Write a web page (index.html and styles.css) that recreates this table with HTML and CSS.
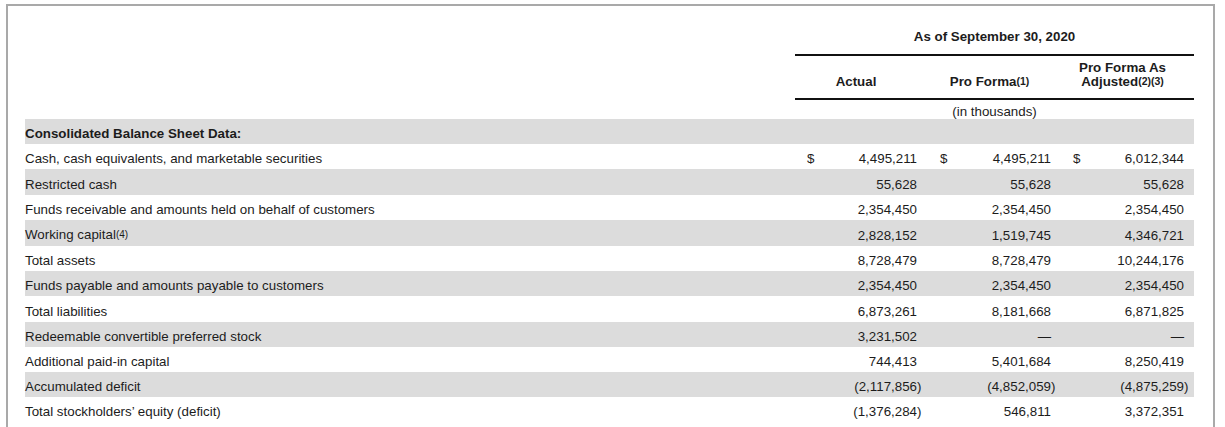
FILE: index.html
```html
<!DOCTYPE html>
<html lang="en">
<head>
  <meta charset="UTF-8">
  <title>Balance Sheet Data</title>
  <link rel="stylesheet" href="styles.css">
</head>
<body>

  <div class="frame">
    <table class="sheet">
      <colgroup>
        <col class="c-label">
        <col class="c-cur"><col class="c-num"><col class="c-par">
        <col class="c-cur"><col class="c-num2"><col class="c-par2">
        <col class="c-cur"><col class="c-num2"><col class="c-par2">
      </colgroup>

      <!-- column headings -->
      <tr class="head-top">
        <td></td>
        <th colspan="9" class="ruled">As of September 30, 2020</th>
      </tr>
      <tr class="head-cols">
        <td></td>
        <th colspan="2" class="ruled">Actual</th>
        <th class="ruled"></th>
        <th colspan="2" class="ruled">Pro Forma<span class="fn">(1)</span></th>
        <th class="ruled"></th>
        <th colspan="2" class="ruled">Pro Forma As<br>Adjusted<span class="fn">(2)(3)</span></th>
        <th class="ruled"></th>
      </tr>
      <tr class="head-unit">
        <td></td>
        <td colspan="9" class="unit">(in thousands)</td>
      </tr>

      <!-- data rows -->
      <tr class="row shade">
        <td class="label section">Consolidated Balance Sheet Data:</td>
        <td colspan="9"></td>
      </tr>
      <tr class="row">
        <td class="label">Cash, cash equivalents, and marketable securities</td>
        <td class="cur">$</td><td class="num">4,495,211</td><td class="par"></td>
        <td class="cur">$</td><td class="num">4,495,211</td><td class="par"></td>
        <td class="cur">$</td><td class="num">6,012,344</td><td class="par"></td>
      </tr>
      <tr class="row shade">
        <td class="label">Restricted cash</td>
        <td class="cur"></td><td class="num">55,628</td><td class="par"></td>
        <td class="cur"></td><td class="num">55,628</td><td class="par"></td>
        <td class="cur"></td><td class="num">55,628</td><td class="par"></td>
      </tr>
      <tr class="row">
        <td class="label">Funds receivable and amounts held on behalf of customers</td>
        <td class="cur"></td><td class="num">2,354,450</td><td class="par"></td>
        <td class="cur"></td><td class="num">2,354,450</td><td class="par"></td>
        <td class="cur"></td><td class="num">2,354,450</td><td class="par"></td>
      </tr>
      <tr class="row shade">
        <td class="label">Working capital<span class="fn">(4)</span></td>
        <td class="cur"></td><td class="num">2,828,152</td><td class="par"></td>
        <td class="cur"></td><td class="num">1,519,745</td><td class="par"></td>
        <td class="cur"></td><td class="num">4,346,721</td><td class="par"></td>
      </tr>
      <tr class="row">
        <td class="label">Total assets</td>
        <td class="cur"></td><td class="num">8,728,479</td><td class="par"></td>
        <td class="cur"></td><td class="num">8,728,479</td><td class="par"></td>
        <td class="cur"></td><td class="num">10,244,176</td><td class="par"></td>
      </tr>
      <tr class="row shade">
        <td class="label">Funds payable and amounts payable to customers</td>
        <td class="cur"></td><td class="num">2,354,450</td><td class="par"></td>
        <td class="cur"></td><td class="num">2,354,450</td><td class="par"></td>
        <td class="cur"></td><td class="num">2,354,450</td><td class="par"></td>
      </tr>
      <tr class="row">
        <td class="label">Total liabilities</td>
        <td class="cur"></td><td class="num">6,873,261</td><td class="par"></td>
        <td class="cur"></td><td class="num">8,181,668</td><td class="par"></td>
        <td class="cur"></td><td class="num">6,871,825</td><td class="par"></td>
      </tr>
      <tr class="row shade">
        <td class="label">Redeemable convertible preferred stock</td>
        <td class="cur"></td><td class="num">3,231,502</td><td class="par"></td>
        <td class="cur"></td><td class="num">&mdash;</td><td class="par"></td>
        <td class="cur"></td><td class="num">&mdash;</td><td class="par"></td>
      </tr>
      <tr class="row">
        <td class="label">Additional paid-in capital</td>
        <td class="cur"></td><td class="num">744,413</td><td class="par"></td>
        <td class="cur"></td><td class="num">5,401,684</td><td class="par"></td>
        <td class="cur"></td><td class="num">8,250,419</td><td class="par"></td>
      </tr>
      <tr class="row shade">
        <td class="label">Accumulated deficit</td>
        <td class="cur"></td><td class="num">(2,117,856</td><td class="par">)</td>
        <td class="cur"></td><td class="num">(4,852,059</td><td class="par">)</td>
        <td class="cur"></td><td class="num">(4,875,259</td><td class="par">)</td>
      </tr>
      <tr class="row">
        <td class="label">Total stockholders&rsquo; equity (deficit)</td>
        <td class="cur"></td><td class="num">(1,376,284</td><td class="par">)</td>
        <td class="cur"></td><td class="num">546,811</td><td class="par"></td>
        <td class="cur"></td><td class="num">3,372,351</td><td class="par"></td>
      </tr>
    </table>
  </div>

</body>
</html>
```

FILE: styles.css
```css
body {
  margin: 0;
  padding: 0;
  background: #fff;
  font-family: "Liberation Sans", Arial, sans-serif;
  color: #1c1c1c;
}

/* grey page outline, open at the bottom */
.frame {
  margin: 4px 0 0 6px;
  width: 1209px;
  box-sizing: border-box;
  border: 2px solid #a9a9a9;
  border-bottom: none;
  padding: 20px 19px 30px 17px;
}

.sheet {
  width: 1169px;
  table-layout: fixed;
  border-collapse: separate;
  border-spacing: 0;
  font-size: 13.33px;
  line-height: 15px;
}

.c-label { width: 770px; }
.c-cur { width: 25px; }
.c-num { width: 97px; }
.c-par { width: 11px; }
.c-num2 { width: 98px; }
.c-par2 { width: 10px; }

.sheet td,
.sheet th {
  padding: 0;
  white-space: nowrap;
}

/* heading rows */
.sheet th {
  font-weight: bold;
  text-align: center;
  vertical-align: bottom;
}

.ruled {
  border-bottom: 2px solid #111;
}

.head-top th {
  padding: 3px 0 10px;
}

.head-cols th {
  padding: 5px 0 9px;
  line-height: 14px;
}

.sheet .unit {
  text-align: center;
  padding-top: 4px;
}

/* data rows */
.row td {
  padding: 7.2px 0 3px;
  vertical-align: bottom;
}

.shade td {
  background-color: #dcdcdc;
}

.section {
  font-weight: bold;
}

.row .cur {
  text-align: left;
  padding-left: 12px;
}

.num {
  text-align: right;
}

.par {
  text-align: left;
}

.fn {
  font-size: 10.5px;
  position: relative;
  top: -1px;
}

.label .fn {
  font-size: 10px;
}
```
